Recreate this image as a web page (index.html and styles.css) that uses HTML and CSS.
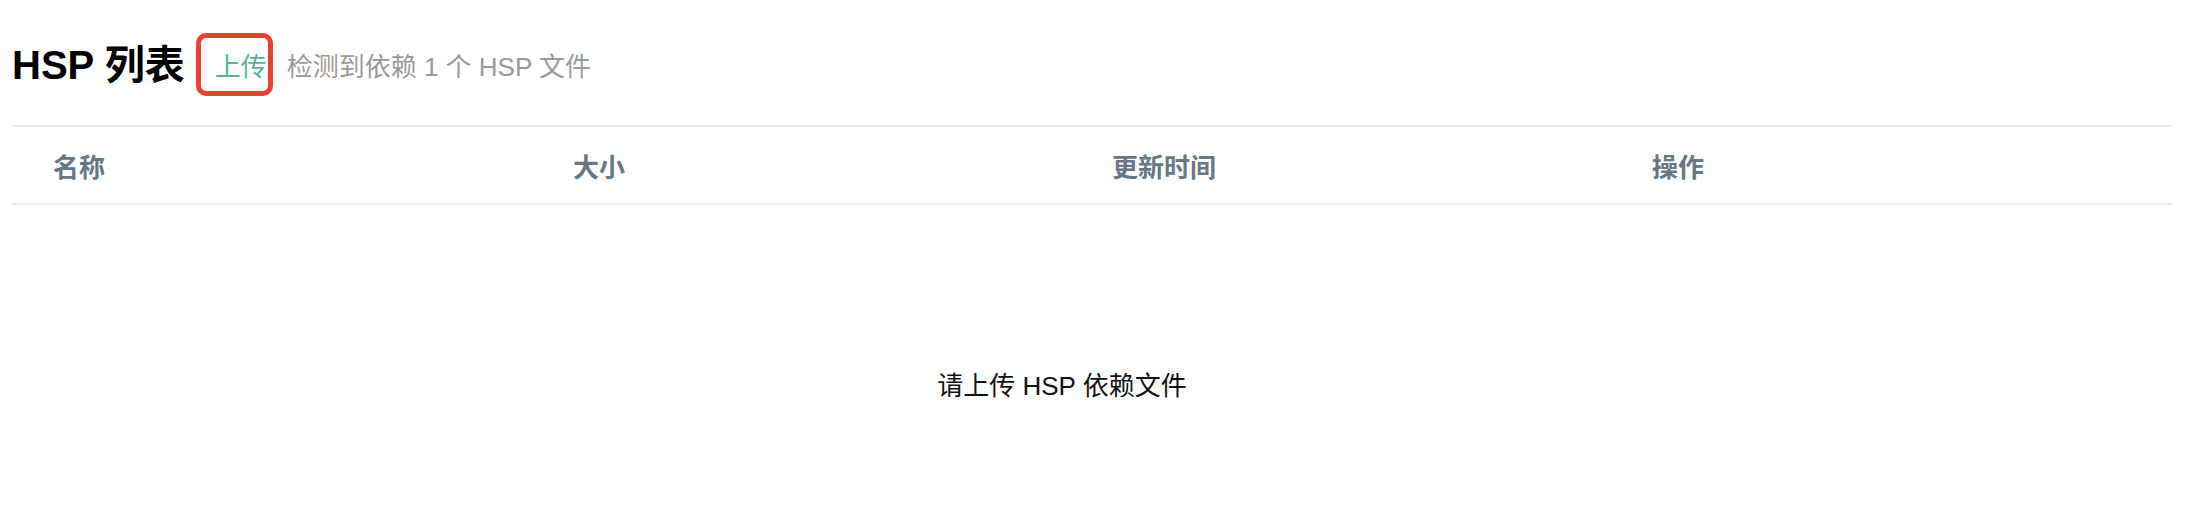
FILE: index.html
```html
<!DOCTYPE html>
<html>
<head>
    <meta charset="UTF-8">
    <title>HSP 列表</title>
    <link rel="stylesheet" href="styles.css">
</head>
<body>
    <div class="container">
        <div class="title-bar">
            <h1>HSP 列表</h1>
            <button type="button" class="upload-btn">上传</button>
            <span class="hint">检测到依赖 1 个 HSP 文件</span>
        </div>

        <div class="table">
            <div class="table-head">
                <div class="cell">名称</div>
                <div class="cell">大小</div>
                <div class="cell">更新时间</div>
                <div class="cell">操作</div>
            </div>
            <div class="empty">请上传 HSP 依赖文件</div>
        </div>
    </div>
</body>
</html>
```

FILE: styles.css
```css
body {
    font-family: "Liberation Sans", "Noto Sans CJK SC", sans-serif;
    margin: 0;
    padding: 0 22px 0 12px;
    background-color: white;
    color: #111;
}
.title-bar {
    display: flex;
    align-items: center;
    padding-top: 33px;
    margin-bottom: 29px;
}
h1 {
    margin: 0 11px 0 0;
    font-size: 40px;
    font-weight: bold;
    line-height: 1;
    color: #000;
}
.upload-btn {
    height: 63px;
    box-sizing: border-box;
    padding: 0 1px 0 14px;
    border: 5px solid #e8432d;
    border-radius: 10px;
    background: none;
    font-family: inherit;
    font-size: 26px;
    color: #56b68d;
    cursor: pointer;
}
.hint {
    margin-left: 14px;
    font-size: 26px;
    color: #999;
}
.table-head {
    display: grid;
    grid-template-columns: 520px 539px 540px 1fr;
    align-items: center;
    height: 80px;
    box-sizing: border-box;
    padding-left: 41px;
    border-top: 2px solid #ebebeb;
    border-bottom: 2px solid #ebebeb;
    font-size: 26px;
    font-weight: bold;
    color: #677784;
}
.empty {
    padding: 160px 60px 100px 0;
    text-align: center;
    font-size: 26px;
    color: #111;
}
```
